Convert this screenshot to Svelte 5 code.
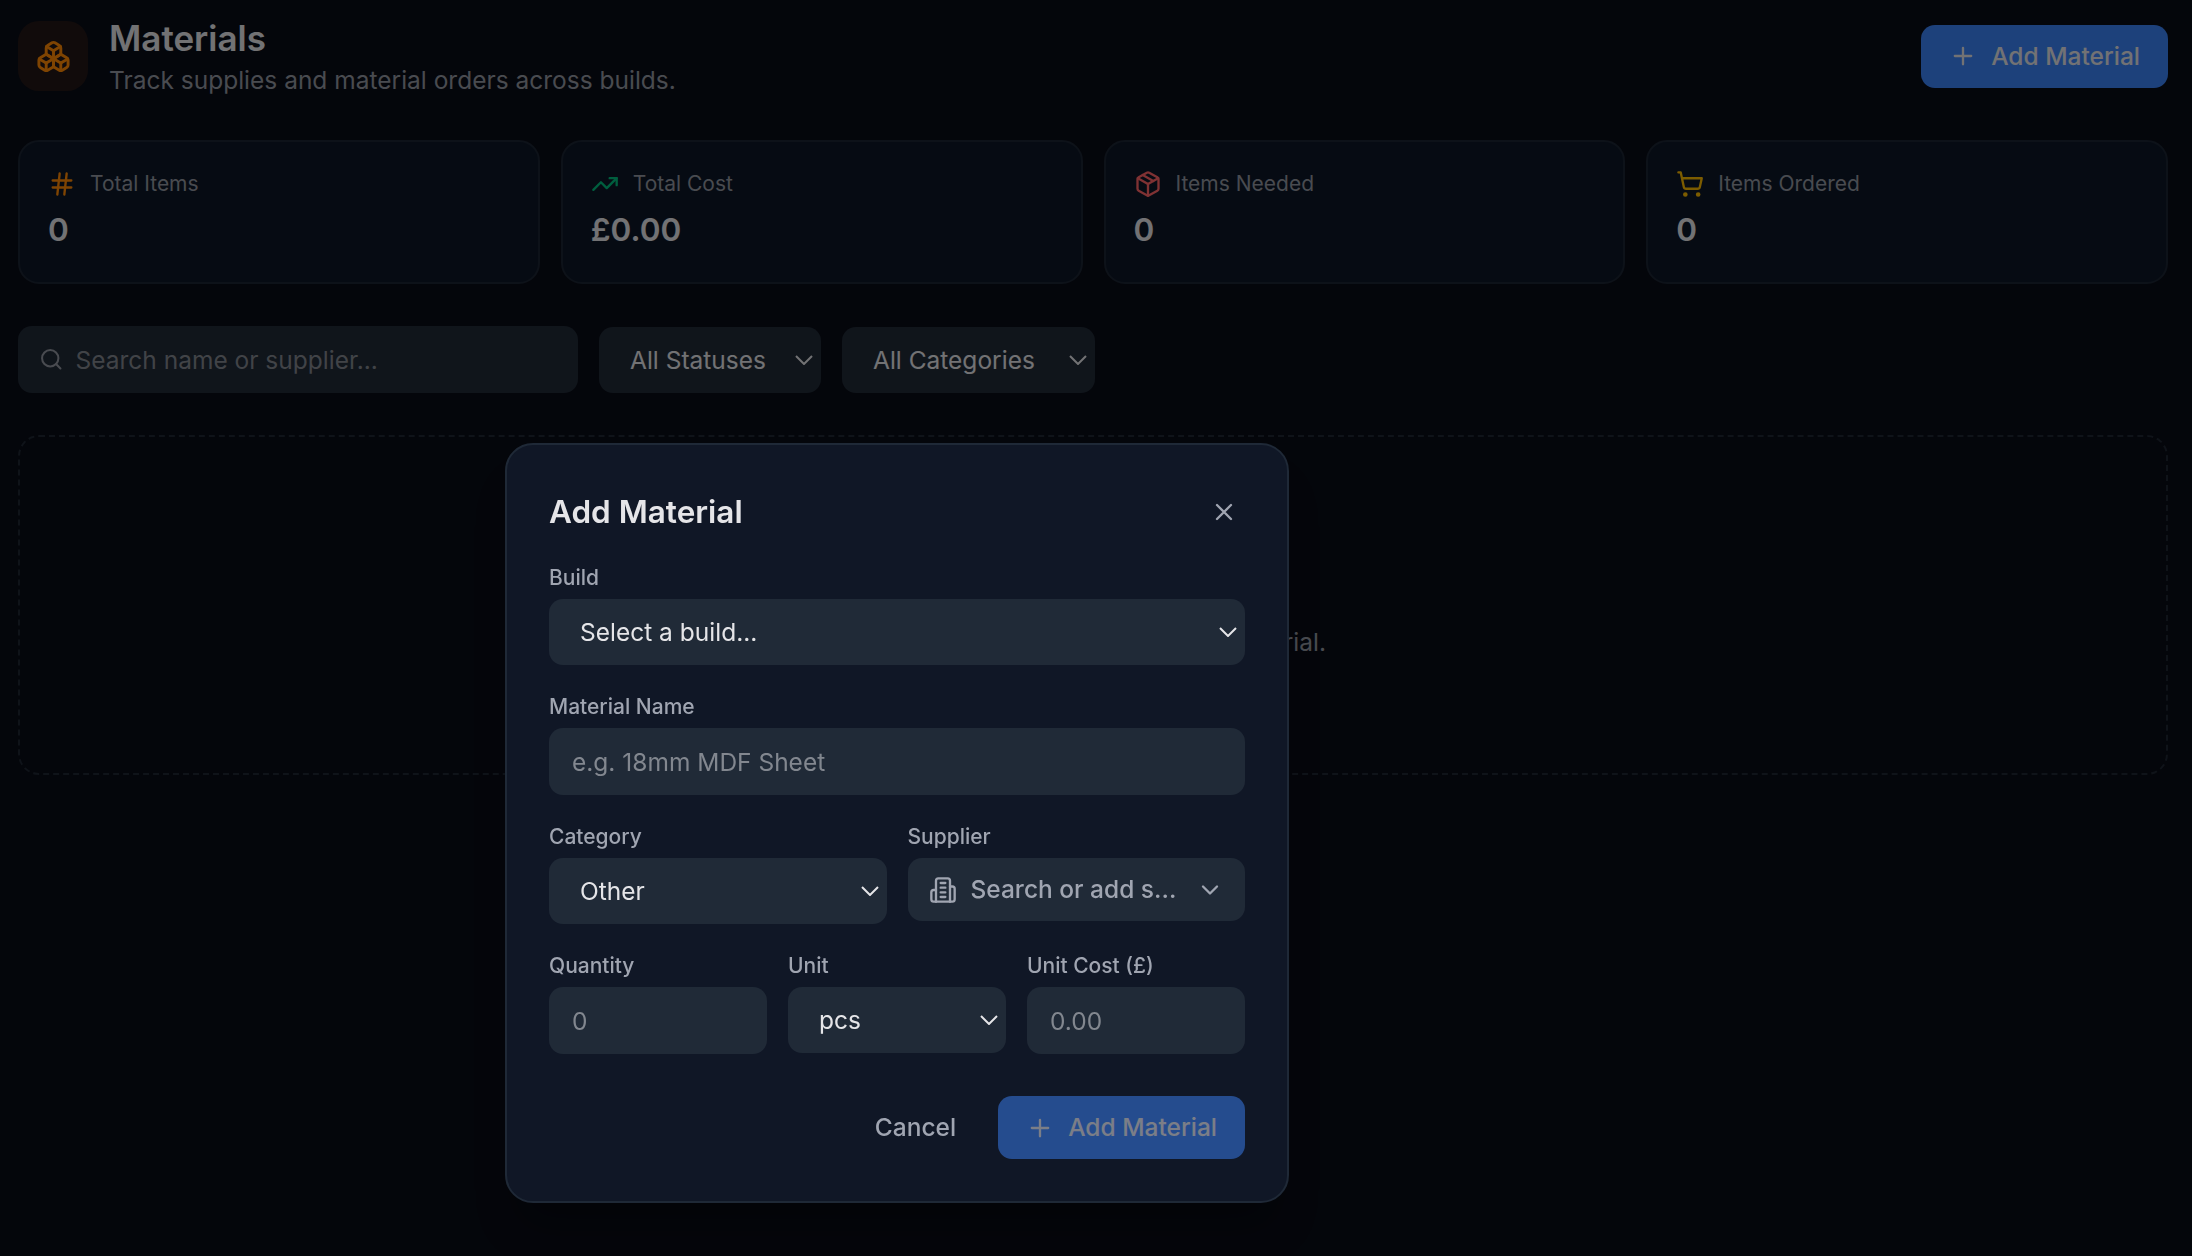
<script>
  let filters = $state({ search: '', status: 'All Statuses', category: 'All Categories' });
  let form = $state({ name: '', quantity: '', unitCost: '' });

  const stats = [
    { label: 'Total Items', value: '0', icon: 'hash' },
    { label: 'Total Cost', value: '£0.00', icon: 'trend' },
    { label: 'Items Needed', value: '0', icon: 'package' },
    { label: 'Items Ordered', value: '0', icon: 'cart' }
  ];
</script>

{#snippet icon(name)}
  <svg class="icon {name}" viewBox="0 0 24 24" aria-hidden="true">
    {#if name === 'boxes'}
      <path d="M2.97 12.92A2 2 0 0 0 2 14.63v3.24a2 2 0 0 0 .97 1.71l3 1.8a2 2 0 0 0 2.06 0L12 19v-5.5l-5-3-4.03 2.42Z" />
      <path d="m7 16.5-4.74-2.85" /><path d="m7 16.5 5-3" /><path d="M7 16.5v5.17" />
      <path d="M12 13.5V19l3.97 2.38a2 2 0 0 0 2.06 0l3-1.8a2 2 0 0 0 .97-1.71v-3.24a2 2 0 0 0-.97-1.71L17 10.5l-5 3Z" />
      <path d="m17 16.5-5-3" /><path d="m17 16.5 4.74-2.85" /><path d="M17 16.5v5.17" />
      <path d="M7.97 4.42A2 2 0 0 0 7 6.13v4.37l5 3 5-3V6.13a2 2 0 0 0-.97-1.71l-3-1.8a2 2 0 0 0-2.06 0l-3 1.8Z" />
      <path d="M12 8 7.26 5.15" /><path d="m12 8 4.74-2.85" /><path d="M12 13.5V8" />
    {:else if name === 'hash'}
      <path d="M4 9h16M4 15h16M10 3 8 21M16 3l-2 18" />
    {:else if name === 'trend'}
      <path d="M16 7h6v6" /><path d="m22 7-8.5 8.5-5-5L2 17" />
    {:else if name === 'package'}
      <path d="M11 21.73a2 2 0 0 0 2 0l7-4A2 2 0 0 0 21 16V8a2 2 0 0 0-1-1.73l-7-4a2 2 0 0 0-2 0l-7 4A2 2 0 0 0 3 8v8a2 2 0 0 0 1 1.73z" />
      <path d="M12 22V12" /><path d="M3.29 7 12 12l8.71-5" /><path d="m7.5 4.27 9 5.15" />
    {:else if name === 'cart'}
      <circle cx="8" cy="21" r="1" /><circle cx="19" cy="21" r="1" />
      <path d="M2.05 2.05h2l2.66 12.42a2 2 0 0 0 2 1.58h9.78a2 2 0 0 0 1.95-1.57l1.65-7.43H5.12" />
    {:else if name === 'search'}
      <circle cx="11" cy="11" r="8" /><path d="m21 21-4.3-4.3" />
    {:else if name === 'plus'}
      <path d="M5 12h14M12 5v14" />
    {:else if name === 'close'}
      <path d="M18 6 6 18M6 6l12 12" />
    {:else if name === 'building'}
      <path d="M6 22V4a2 2 0 0 1 2-2h8a2 2 0 0 1 2 2v18Z" />
      <path d="M6 12H4a2 2 0 0 0-2 2v6a2 2 0 0 0 2 2h2" />
      <path d="M18 9h2a2 2 0 0 1 2 2v9a2 2 0 0 1-2 2h-2" />
      <path d="M10 6h4M10 10h4M10 14h4M10 18h4" />
    {:else if name === 'chevron'}
      <path d="m6 9 6 6 6-6" />
    {/if}
  </svg>
{/snippet}

{#snippet select(value, id)}
  <button class="select" {id} type="button">
    <span>{value}</span>
    <svg class="arrow" viewBox="0 0 18 10" aria-hidden="true"><path d="m1 1 8 8 8-8" /></svg>
  </button>
{/snippet}

<main class="page">
  <header class="page-header">
    <div class="badge">{@render icon('boxes')}</div>
    <div class="heading">
      <h1>Materials</h1>
      <p>Track supplies and material orders across builds.</p>
    </div>
    <button class="btn primary">{@render icon('plus')}Add Material</button>
  </header>

  <section class="stats">
    {#each stats as stat}
      <div class="card">
        <div class="card-label">{@render icon(stat.icon)}{stat.label}</div>
        <div class="card-value">{stat.value}</div>
      </div>
    {/each}
  </section>

  <section class="filters">
    <label class="search-box">
      {@render icon('search')}
      <input bind:value={filters.search} placeholder="Search name or supplier..." />
    </label>
    <div class="status">{@render select(filters.status, 'status')}</div>
    <div class="categories">{@render select(filters.category, 'categories')}</div>
  </section>

  <section class="empty">
    <p>No materials yet. Add your first material.</p>
  </section>
</main>

<div class="backdrop"></div>

<div class="modal" role="dialog" aria-label="Add Material">
  <div class="modal-header">
    <h2>Add Material</h2>
    <button class="close-btn" aria-label="Close">{@render icon('close')}</button>
  </div>

  <div class="fields">
    <div class="field">
      <label for="build">Build</label>
      {@render select('Select a build...', 'build')}
    </div>

    <div class="field">
      <label for="name">Material Name</label>
      <input id="name" bind:value={form.name} placeholder="e.g. 18mm MDF Sheet" />
    </div>

    <div class="row two">
      <div class="field">
        <label for="category">Category</label>
        {@render select('Other', 'category')}
      </div>
      <div class="field">
        <label for="supplier">Supplier</label>
        <button class="combo" id="supplier" type="button">
          {@render icon('building')}
          <span>Search or add s...</span>
          {@render icon('chevron')}
        </button>
      </div>
    </div>

    <div class="row three">
      <div class="field">
        <label for="quantity">Quantity</label>
        <input id="quantity" bind:value={form.quantity} placeholder="0" />
      </div>
      <div class="field">
        <label for="unit">Unit</label>
        {@render select('pcs', 'unit')}
      </div>
      <div class="field">
        <label for="cost">Unit Cost (£)</label>
        <input id="cost" bind:value={form.unitCost} placeholder="0.00" />
      </div>
    </div>
  </div>

  <div class="actions">
    <button class="btn ghost">Cancel</button>
    <button class="btn primary" disabled>{@render icon('plus')}Add Material</button>
  </div>
</div>

<style>
  :global(html) {
    font-size: 28px;
  }

  :global(body) {
    background: #090c16;
    color: #e5e5e8;
    font-family: Inter, 'Liberation Sans', sans-serif;
    font-size: 0.875rem;
    line-height: 1.25rem;
    overflow: hidden;
  }

  h1, h2, p {
    margin: 0;
  }

  button, input {
    box-sizing: border-box;
    border: none;
    font: inherit;
    color: inherit;
    letter-spacing: inherit;
  }

  .icon {
    width: 1rem;
    height: 1rem;
    flex: none;
    fill: none;
    stroke: currentColor;
    stroke-width: 2;
    stroke-linecap: round;
    stroke-linejoin: round;
  }

  /* Page */
  .page {
    padding: 14px 24px 0 18px;
    display: flex;
    flex-direction: column;
    gap: 1.5rem;
  }

  .page-header {
    display: flex;
    align-items: center;
    gap: 0.75rem;
  }

  .badge {
    width: 2.5rem;
    height: 2.5rem;
    border-radius: 0.75rem;
    background: #231717;
    color: #ff8904;
    display: flex;
    align-items: center;
    justify-content: center;
  }
  .badge .icon {
    width: 1.25rem;
    height: 1.25rem;
  }

  .heading {
    flex: 1;
  }

  h1 {
    font-size: 1.25rem;
    line-height: 1.75rem;
    font-weight: 600;
  }

  .heading p {
    color: #9296a0;
  }

  .btn {
    height: 2.25rem;
    padding: 0 1rem;
    border-radius: 0.5rem;
    display: flex;
    align-items: center;
    gap: 0.5rem;
    font-weight: 500;
  }
  .btn.primary {
    background: #3b82f6;
  }
  .btn.primary:disabled {
    opacity: 0.5;
  }
  .btn.ghost {
    background: none;
    color: #a0a5b1;
  }

  .stats {
    display: grid;
    grid-template-columns: repeat(4, 1fr);
    gap: 0.75rem;
  }

  .card {
    padding: 1rem;
    border: 2px solid #1b2432;
    border-radius: 0.75rem;
    background: #0d1727;
  }

  .card-label {
    display: flex;
    align-items: center;
    gap: 0.5rem;
    font-size: 0.75rem;
    line-height: 1rem;
    color: #9296a0;
  }

  .card-value {
    margin-top: 0.25rem;
    font-size: 1.125rem;
    line-height: 1.75rem;
    font-weight: 600;
  }

  .hash { color: #ff8904; }
  .trend { color: #00bc7d; }
  .package { color: #ff6467; }
  .cart { color: #f9b800; }

  /* Form controls */
  input {
    width: 100%;
    height: 67px;
    padding: 0 23px;
    border-radius: 0.5rem;
    background: #202a37;
  }
  input::placeholder {
    color: #82878f;
    opacity: 1;
  }

  .select {
    width: 100%;
    height: 66px;
    padding: 0 8px 0 31px;
    border-radius: 0.5rem;
    background: #202a37;
    display: flex;
    align-items: center;
    justify-content: space-between;
  }

  .arrow {
    width: 18px;
    height: 10px;
    fill: none;
    stroke: currentColor;
    stroke-width: 2;
  }

  .filters {
    display: flex;
    align-items: flex-end;
    gap: 0.75rem;
  }

  .search-box {
    width: 20rem;
    height: 67px;
    box-sizing: border-box;
    padding-left: 0.75rem;
    border-radius: 0.5rem;
    background: #202a37;
    display: flex;
    align-items: center;
    color: #9296a0;
  }
  .search-box input {
    flex: 1;
    padding: 0 12px;
    background: none;
  }
  .search {
    width: 0.875rem;
    height: 0.875rem;
  }

  .status { width: 222px; }
  .categories { width: 253px; }

  .empty {
    height: 340px;
    box-sizing: border-box;
    padding-top: 75px;
    border: 2px dashed #1e2632;
    border-radius: 0.75rem;
    display: flex;
    align-items: center;
    justify-content: center;
    color: #9296a0;
  }

  /* Dialog */
  .backdrop {
    position: fixed;
    inset: 0;
    background: rgba(0, 0, 0, 0.5);
  }

  .modal {
    position: fixed;
    left: 505px;
    top: 443px;
    width: 28rem;
    box-sizing: border-box;
    padding: 1.5rem;
    border: 2px solid #1f2937;
    border-radius: 1rem;
    background: #101726;
    box-shadow: 0 35px 44px -9px rgba(0, 0, 0, 0.25);
  }

  .modal-header {
    display: flex;
    align-items: center;
    justify-content: space-between;
    margin-bottom: 1rem;
  }

  h2 {
    font-size: 1.125rem;
    line-height: 1.75rem;
    font-weight: 600;
  }

  .close-btn {
    width: 1.5rem;
    height: 1.5rem;
    padding: 0;
    background: none;
    color: #a0a5b1;
    display: flex;
    align-items: center;
    justify-content: center;
  }

  .fields {
    display: flex;
    flex-direction: column;
    gap: 1rem;
  }

  .field {
    display: flex;
    flex-direction: column;
    gap: 0.25rem;
    min-width: 0;
  }

  .field label {
    font-size: 0.75rem;
    line-height: 1rem;
    font-weight: 500;
    color: #a0a5b1;
  }

  .row {
    display: grid;
    gap: 0.75rem;
  }
  .two { grid-template-columns: 1fr 1fr; }
  .three { grid-template-columns: 1fr 1fr 1fr; }

  .combo {
    width: 100%;
    height: 2.25rem;
    padding: 0 0.75rem;
    border-radius: 0.5rem;
    background: #202a37;
    color: #a0a5b1;
    font-weight: 500;
    display: flex;
    align-items: center;
    gap: 0.5rem;
  }
  .combo span {
    flex: 1;
    text-align: left;
    white-space: nowrap;
  }

  .actions {
    display: flex;
    justify-content: flex-end;
    gap: 0.5rem;
    margin-top: 1.5rem;
  }
</style>
